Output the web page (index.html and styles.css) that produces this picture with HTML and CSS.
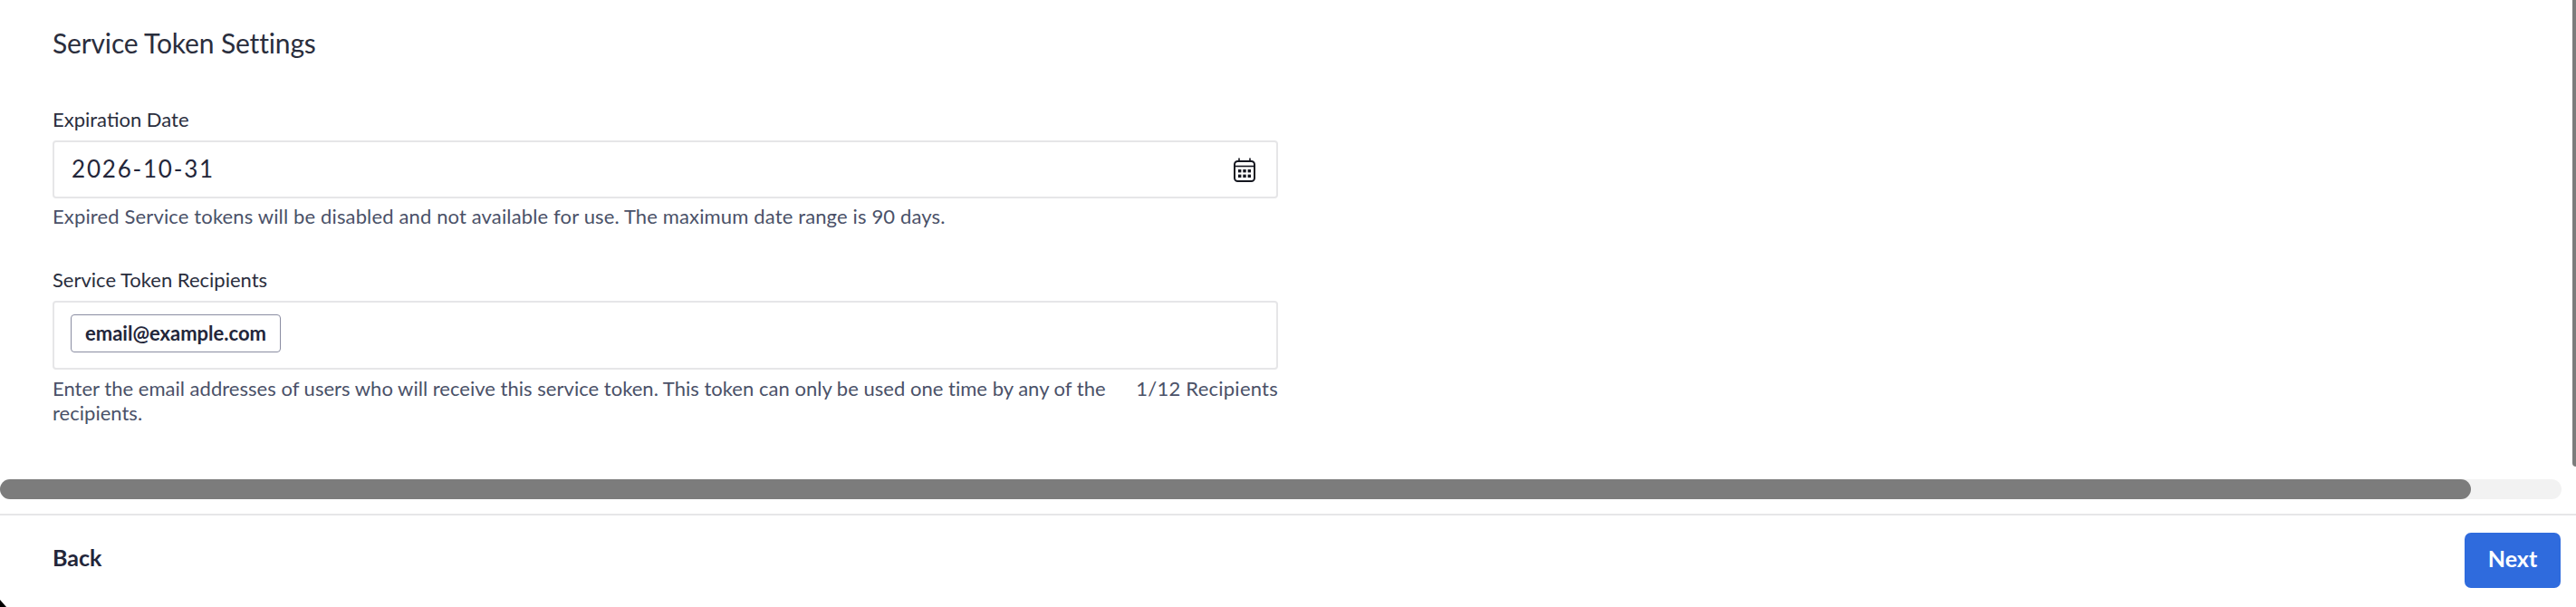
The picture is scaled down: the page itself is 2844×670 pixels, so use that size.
FILE: index.html
```html
<!DOCTYPE html>
<html lang="en">
<head>
<meta charset="utf-8">
<title>Service Token Settings</title>
<link rel="stylesheet" href="styles.css">
</head>
<body>
<div class="page">
  <main class="content">
    <h1 class="title">Service Token Settings</h1>
    <section class="field field-date">
      <label class="label">Expiration Date</label>
      <div class="box date-box">
        <span class="date-value">2026-10-31</span>
        <svg class="cal" viewBox="0 0 24 27" width="24" height="27" fill="none" stroke="#14161f" stroke-width="2">
          <path d="M6 0.5V4M18 0.5V4" stroke-width="1.6"/>
          <rect x="1" y="4" width="22" height="22" rx="3.5"/>
          <path d="M1 9.5H23" stroke-width="1.6"/>
          <g fill="#14161f" stroke="none">
            <rect x="5" y="13" width="3.4" height="3.4"/><rect x="10.3" y="13" width="3.4" height="3.4"/><rect x="15.6" y="13" width="3.4" height="3.4"/>
            <rect x="5" y="18.6" width="3.4" height="3.4"/><rect x="10.3" y="18.6" width="3.4" height="3.4"/><rect x="15.6" y="18.6" width="3.4" height="3.4"/>
          </g>
        </svg>
      </div>
      <p class="help">Expired Service tokens will be disabled and not available for use. The maximum date range is 90 days.</p>
    </section>
    <section class="field field-rec">
      <label class="label">Service Token Recipients</label>
      <div class="box rec-box"><span class="chip">email@example.com</span></div>
      <div class="help-row">
        <p class="help help-wrap">Enter the email addresses of users who will receive this service token. This token can only be used one time by any of the recipients.</p>
        <span class="help count">1/12 Recipients</span>
      </div>
    </section>
  </main>
  <div class="hbar"><div class="hthumb"></div></div>
  <footer class="footer">
    <button class="back">Back</button>
    <button class="next">Next</button>
  </footer>
  <div class="vthumb"></div>
  <div class="corner"></div>
</div>
</body>
</html>
```
FILE: styles.css
```css
* { box-sizing: border-box; }
html, body { margin: 0; height: 100%; background: #fff; overflow: hidden; }
body { font-family: "Lato", sans-serif; color: #2a2e3d; }
.page { position: relative; width: 2844px; height: 670px; overflow: hidden; }
.content { height: 529px; padding: 29px 0 0 58px; width: 1411px; }
.title { margin: 0; font-size: 30px; letter-spacing: -0.15px; line-height: 36px; font-weight: 400; color: #2a2e3d; }
.field-date { margin-top: 53px; }
.field-rec { margin-top: 43px; }
.label { display: block; font-size: 22px; line-height: 28px; height: 37px; color: #2a2e3d; }
.box { border: 2px solid #e6e6e8; border-radius: 4px; background: #fff; display: flex; align-items: center; }
.date-box { height: 64px; padding: 0 23px 0 19px; justify-content: space-between; }
.date-value { font-size: 26px; letter-spacing: 1.8px; color: #23263a; padding-bottom: 3px; }
.cal { display: block; }
.rec-box { height: 76px; padding: 13px 18px 0; align-items: flex-start; }
.chip { display: flex; align-items: center; height: 42px; width: 232px; justify-content: center; border: 1px solid #8a8da2; border-radius: 4px; font-size: 22px; font-weight: 700; color: #23263a; padding-bottom: 1px; }
.help { margin: 0; font-size: 22px; letter-spacing: 0.14px; line-height: 27px; color: #4a5168; }
.field-date .help { margin-top: 6px; }
.help-row { display: flex; justify-content: space-between; margin-top: 7px; }
.help-row .help-wrap { width: 1170px; letter-spacing: 0.02px; }
.help-row .count { white-space: nowrap; letter-spacing: 0.24px; }
.hbar { height: 22px; width: 2828px; border-radius: 11px; background: #f2f2f2; }
.hthumb { height: 22px; width: 2728px; border-radius: 11px; background: #7c7c7c; }
.footer { margin-top: 16px; border-top: 2px solid #e6e6e8; height: 103px; width: 2844px; display: flex; justify-content: space-between; align-items: flex-start; padding: 19px 17px 0 58px; }
.back { border: 0; background: none; padding: 0; font: 700 25px/30px "Lato", sans-serif; height: 54px; color: #23263a; }
.next { border: 0; width: 106px; height: 61px; border-radius: 7px; background: #2f6bdd; color: #fff; font: 700 25px "Lato", sans-serif; padding: 0 0 6px; }
.vthumb { position: absolute; right: 0; top: -20px; width: 4px; height: 535px; border-radius: 6px 0 0 6px; background: #7c7c7c; }
.corner { position: absolute; left: 0; bottom: 0; width: 0; height: 0; border-left: 7px solid #000; border-top: 8px solid transparent; }
```
